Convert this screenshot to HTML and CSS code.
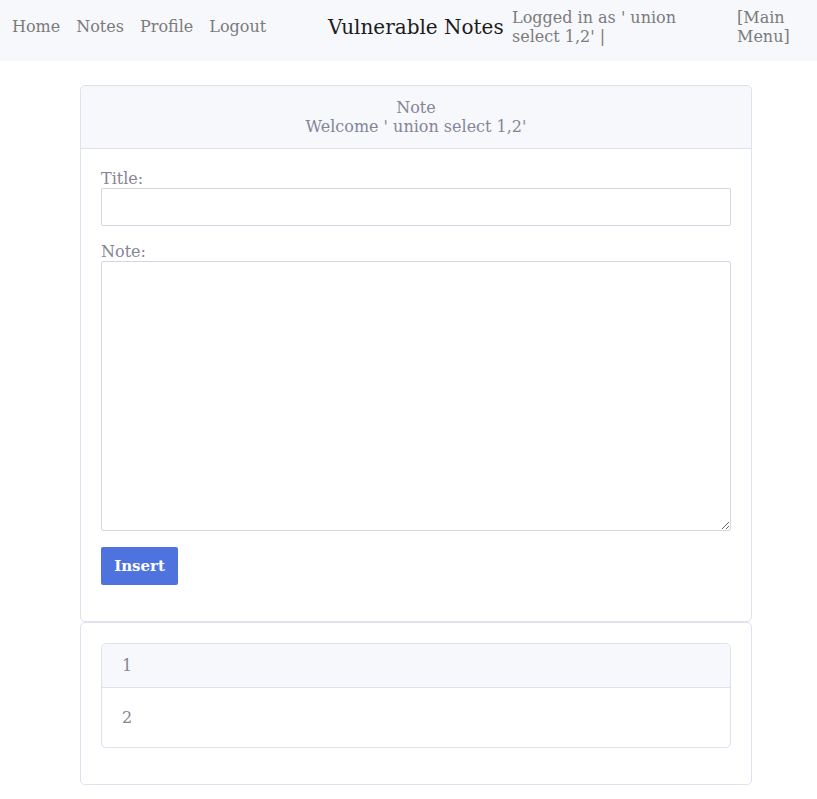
FILE: index.html
```html
<!DOCTYPE html>
<html>
<head>
<meta charset="utf-8">
<title>Vulnerable Notes</title>
<link rel="stylesheet" href="styles.css">
</head>
<body>
<nav class="topnav">
  <div class="links">
    <a href="#">Home</a>
    <a href="#">Notes</a>
    <a href="#">Profile</a>
    <a href="#">Logout</a>
  </div>
  <div class="brand">Vulnerable Notes</div>
  <div class="user">Logged in as ' union select 1,2' |</div>
  <div class="menu">[Main Menu]</div>
</nav>
<main class="wrap">
  <section class="card">
    <header class="card-head">
      <div>Note</div>
      <div>Welcome ' union select 1,2'</div>
    </header>
    <form class="card-body">
      <label class="lbl">Title:</label>
      <input class="field" type="text">
      <label class="lbl lbl-note">Note:</label>
      <textarea class="field area"></textarea>
      <button type="button" class="btn">Insert</button>
    </form>
  </section>
  <section class="card list-card">
    <ul class="list">
      <li class="item item-first">1</li>
      <li class="item item-last">2</li>
    </ul>
  </section>
</main>
</body>
</html>
```
FILE: styles.css
```css
* { box-sizing: border-box; }
body {
  margin: 0;
  font-family: "DejaVu Serif", serif;
  font-size: 16px;
  color: #858596;
  background: #fff;
}
.topnav {
  height: 61px;
  background: #f7f8fc;
  display: flex;
  align-items: center;
  padding: 0 12px 8px;
}
.links {
  display: flex;
  gap: 16px;
  width: 316px;
}
.links a {
  color: #7b7b7b;
  text-decoration: none;
}
.brand {
  font-size: 20px;
  color: #1c1c1c;
  width: 184px;
}
.user {
  width: 215px;
  color: #7b7b7b;
  line-height: 19px;
}
.menu {
  margin-left: 10px;
  width: 60px;
  color: #7b7b7b;
  line-height: 19px;
}
.wrap {
  width: 672px;
  margin: 24px 0 0 80px;
}
.card {
  border: 1px solid #dfe1ee;
  border-radius: 5px;
  background: #fff;
}
.card-head {
  background: #f7f8fc;
  border-bottom: 1px solid #dfe1ee;
  border-radius: 5px 5px 0 0;
  text-align: center;
  padding: 12px 0 12px;
  line-height: 19px;
}
.card-body {
  display: flex;
  flex-direction: column;
  align-items: flex-start;
  padding: 20px 20px 36px;
}
.lbl {
  line-height: 19px;
}
.lbl-note { margin-top: 16px; }
.field {
  display: block;
  width: 630px;
  height: 38px;
  border: 1px solid #d6d6e2;
  border-radius: 2px;
  background: #fff;
  font: inherit;
  margin: 0;
}
.area {
  height: 270px;
  resize: vertical;
}
.btn {
  margin-top: 16px;
  background: #4e73df;
  color: #fff;
  border: none;
  border-radius: 2px;
  font-family: "DejaVu Serif", serif;
  font-weight: bold;
  font-size: 15px;
  width: 77px;
  height: 38px;
  padding: 0;
}
.list-card {
  padding: 20px 20px 36px;
}
.list {
  list-style: none;
  margin: 0;
  padding: 0;
  border: 1px solid #dfe1ee;
  border-radius: 5px;
}
.item {
  padding: 0 20px;
  line-height: 19px;
}
.item-first {
  background: #f7f8fc;
  border-bottom: 1px solid #dfe1ee;
  border-radius: 5px 5px 0 0;
  padding-top: 12px;
  padding-bottom: 12px;
}
.item-last {
  padding-top: 20px;
  padding-bottom: 20px;
}
```
